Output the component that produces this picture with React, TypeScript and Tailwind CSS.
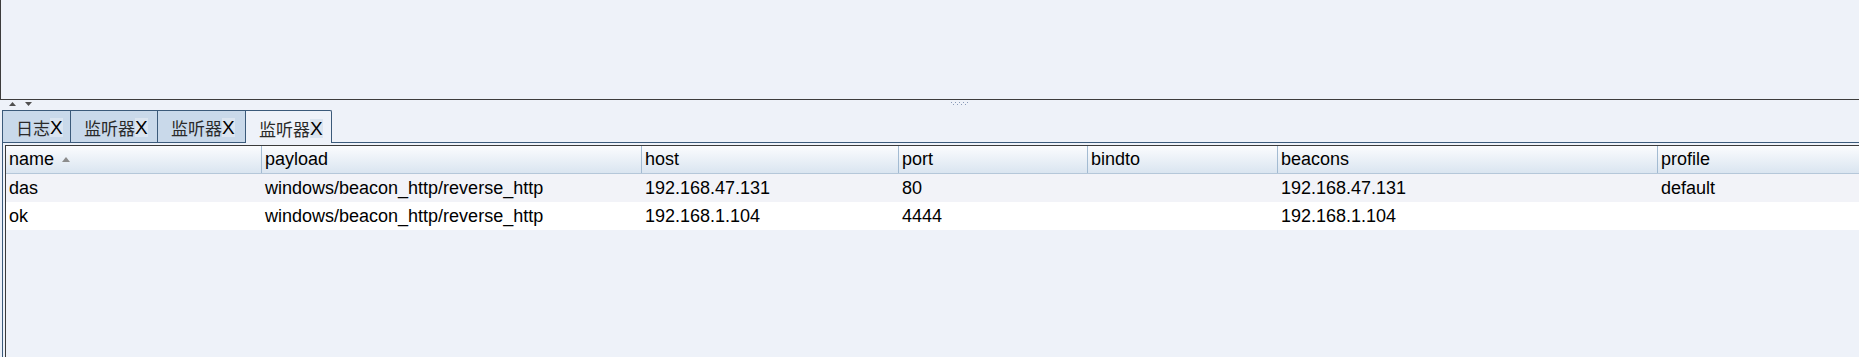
import React from 'react';

const columns = ['name', 'payload', 'host', 'port', 'bindto', 'beacons', 'profile'];

const rows = [
  ['das', 'windows/beacon_http/reverse_http', '192.168.47.131', '80', '', '192.168.47.131', 'default'],
  ['ok', 'windows/beacon_http/reverse_http', '192.168.1.104', '4444', '', '192.168.1.104', ''],
];

const tabs = [
  { label: '日志', width: 'w-[68px]', selected: false },
  { label: '监听器', width: 'w-[87px]', selected: false },
  { label: '监听器', width: 'w-[88px]', selected: false },
  { label: '监听器', width: 'w-[87px]', selected: true },
];

const gridCols = 'grid grid-cols-[256px_380px_257px_189px_190px_380px_1fr]';

function Tab({ label, width, selected }: { label: string; width: string; selected: boolean }) {
  return (
    <div
      className={`${width} h-[33px] flex items-center pl-[13px] pt-[2px] border-l border-t border-[#3b5a7a] ${
        selected ? 'bg-[#eef2f9] border-r rounded-tr-[2px]' : 'bg-[#c9d9ea] border-b'
      }`}
    >
      <span className="text-[17px] leading-none text-[#2a2a2a] font-['Noto_Sans_CJK_SC',sans-serif]">{label}</span>
      <span className="text-[19px] leading-none text-black font-['Liberation_Sans',sans-serif] bg-[#dbe5f0]">X</span>
    </div>
  );
}

export default function App() {
  return (
    <div className="w-[1859px] h-[357px] bg-[#eef2f9] overflow-hidden flex flex-col font-['Liberation_Sans',Arial,sans-serif]">
      {/* upper split pane */}
      <div className="h-[100px] shrink-0 border-l border-b border-[#3c3c3c]" />

      {/* divider */}
      <div className="h-[10px] shrink-0 flex items-start pt-[2px]">
        <svg className="ml-[9px]" width="7" height="4" viewBox="0 0 7 4">
          <path d="M0 4 L3.5 0 L7 4 Z" fill="#505050" />
        </svg>
        <svg className="ml-[9px]" width="7" height="4" viewBox="0 0 7 4">
          <path d="M0 0 L7 0 L3.5 4 Z" fill="#505050" />
        </svg>
        <svg className="ml-[919px]" width="19" height="3" viewBox="0 0 19 3">
          {[0, 4, 8, 12, 16].map((x) => (
            <rect key={'a' + x} x={x} y={0} width="1" height="1" fill="#8a9bb8" />
          ))}
          {[2, 6, 10, 14].map((x) => (
            <rect key={'b' + x} x={x} y={2} width="1" height="1" fill="#8a9bb8" />
          ))}
        </svg>
      </div>

      {/* tabbed pane */}
      <div className="ml-[2px] flex-1 flex flex-col">
        <div className="flex items-end">
          {tabs.map((t, i) => (
            <Tab key={i} {...t} />
          ))}
          <div className="flex-1 h-[1px] bg-[#3b5a7a]" />
        </div>

        <div className="flex-1 border-l border-[#3b5a7a] pl-[2px] pt-[2px]">
          <div className="h-full border-l border-t border-[#3a3a3a] bg-[#eef2f9]">
            {/* header */}
            <div className={`${gridCols} h-[28px] bg-gradient-to-b from-[#fbfcfe] to-[#dae5f0] border-b border-[#b5c7d9]`}>
              {columns.map((c, i) => (
                <div
                  key={c}
                  className={`flex items-center pl-[3px] text-[18px] text-black ${
                    i < columns.length - 1 ? 'border-r border-[#a3bbd2]' : ''
                  }`}
                >
                  {c}
                  {c === 'name' && (
                    <svg className="ml-[8px]" width="8" height="5" viewBox="0 0 8 5">
                      <path d="M0 5 L4 0 L8 5 Z" fill="#8c8c8c" />
                    </svg>
                  )}
                </div>
              ))}
            </div>

            {/* rows */}
            {rows.map((r, ri) => (
              <div key={ri} className={`${gridCols} h-[28px] ${ri % 2 === 0 ? 'bg-[#f2f3f8]' : 'bg-white'}`}>
                {r.map((cell, ci) => (
                  <div key={ci} className="flex items-center pl-[3px] text-[18px] text-black whitespace-nowrap">
                    {cell}
                  </div>
                ))}
              </div>
            ))}
          </div>
        </div>
      </div>
    </div>
  );
}
